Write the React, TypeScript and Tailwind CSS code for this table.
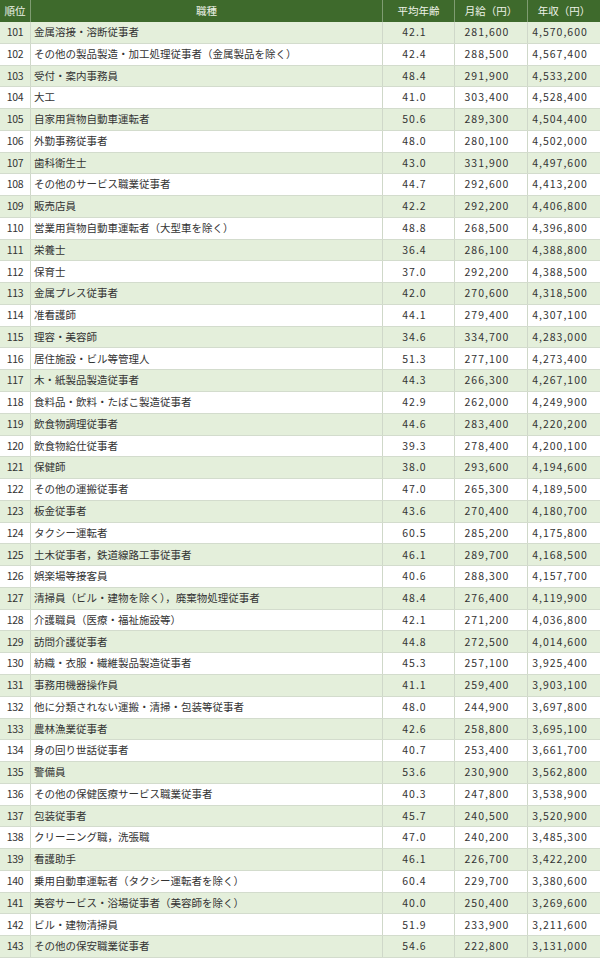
const rows: [number, string, string, string, string][] = [
  [101, '金属溶接・溶断従事者', '42.1', '281,600', '4,570,600'],
  [102, 'その他の製品製造・加工処理従事者（金属製品を除く）', '42.4', '288,500', '4,567,400'],
  [103, '受付・案内事務員', '48.4', '291,900', '4,533,200'],
  [104, '大工', '41.0', '303,400', '4,528,400'],
  [105, '自家用貨物自動車運転者', '50.6', '289,300', '4,504,400'],
  [106, '外勤事務従事者', '48.0', '280,100', '4,502,000'],
  [107, '歯科衛生士', '43.0', '331,900', '4,497,600'],
  [108, 'その他のサービス職業従事者', '44.7', '292,600', '4,413,200'],
  [109, '販売店員', '42.2', '292,200', '4,406,800'],
  [110, '営業用貨物自動車運転者（大型車を除く）', '48.8', '268,500', '4,396,800'],
  [111, '栄養士', '36.4', '286,100', '4,388,800'],
  [112, '保育士', '37.0', '292,200', '4,388,500'],
  [113, '金属プレス従事者', '42.0', '270,600', '4,318,500'],
  [114, '准看護師', '44.1', '279,400', '4,307,100'],
  [115, '理容・美容師', '34.6', '334,700', '4,283,000'],
  [116, '居住施設・ビル等管理人', '51.3', '277,100', '4,273,400'],
  [117, '木・紙製品製造従事者', '44.3', '266,300', '4,267,100'],
  [118, '食料品・飲料・たばこ製造従事者', '42.9', '262,000', '4,249,900'],
  [119, '飲食物調理従事者', '44.6', '283,400', '4,220,200'],
  [120, '飲食物給仕従事者', '39.3', '278,400', '4,200,100'],
  [121, '保健師', '38.0', '293,600', '4,194,600'],
  [122, 'その他の運搬従事者', '47.0', '265,300', '4,189,500'],
  [123, '板金従事者', '43.6', '270,400', '4,180,700'],
  [124, 'タクシー運転者', '60.5', '285,200', '4,175,800'],
  [125, '土木従事者，鉄道線路工事従事者', '46.1', '289,700', '4,168,500'],
  [126, '娯楽場等接客員', '40.6', '288,300', '4,157,700'],
  [127, '清掃員（ビル・建物を除く），廃棄物処理従事者', '48.4', '276,400', '4,119,900'],
  [128, '介護職員（医療・福祉施設等）', '42.1', '271,200', '4,036,800'],
  [129, '訪問介護従事者', '44.8', '272,500', '4,014,600'],
  [130, '紡織・衣服・繊維製品製造従事者', '45.3', '257,100', '3,925,400'],
  [131, '事務用機器操作員', '41.1', '259,400', '3,903,100'],
  [132, '他に分類されない運搬・清掃・包装等従事者', '48.0', '244,900', '3,697,800'],
  [133, '農林漁業従事者', '42.6', '258,800', '3,695,100'],
  [134, '身の回り世話従事者', '40.7', '253,400', '3,661,700'],
  [135, '警備員', '53.6', '230,900', '3,562,800'],
  [136, 'その他の保健医療サービス職業従事者', '40.3', '247,800', '3,538,900'],
  [137, '包装従事者', '45.7', '240,500', '3,520,900'],
  [138, 'クリーニング職，洗張職', '47.0', '240,200', '3,485,300'],
  [139, '看護助手', '46.1', '226,700', '3,422,200'],
  [140, '乗用自動車運転者（タクシー運転者を除く）', '60.4', '229,700', '3,380,600'],
  [141, '美容サービス・浴場従事者（美容師を除く）', '40.0', '250,400', '3,269,600'],
  [142, 'ビル・建物清掃員', '51.9', '233,900', '3,211,600'],
  [143, 'その他の保安職業従事者', '54.6', '222,800', '3,131,000'],
];

const cols = 'grid grid-cols-[31px_352px_72px_73px_72px]';

export default function App() {
  return (
    <div className="w-[600px] h-[958px] overflow-hidden bg-white text-[10.5px] text-[#333] font-['Noto_Sans_CJK_JP',sans-serif] leading-none">
      {/* Header */}
      <div className={`${cols} h-[22px] bg-[#3e6a2c] text-[#eef3e8]`}>
        <div className="flex items-center justify-center border-r border-[#7f9c72]">順位</div>
        <div className="flex items-center justify-center border-r border-[#7f9c72]">職種</div>
        <div className="flex items-center justify-center border-r border-[#7f9c72]">平均年齢</div>
        <div className="flex items-center justify-center border-r border-[#7f9c72]">月給（円）</div>
        <div className="flex items-center justify-center">年収（円）</div>
      </div>

      {rows.map(([rank, job, age, monthly, annual], i) => (
        <div
          key={rank}
          className={`${cols} h-[21.77px] border-b border-[#d3dccd] ${i % 2 === 0 ? 'bg-[#e4efdb]' : 'bg-white'}`}
        >
          <div className="flex items-center justify-center tracking-[-0.3px] border-r border-[#cfd8c9]">{rank}</div>
          <div className="flex items-center pl-[3px] border-r border-[#cfd8c9] whitespace-nowrap overflow-hidden">{job}</div>
          <div className="flex items-center justify-center pr-2 tracking-[1px] border-r border-[#cfd8c9]">{age}</div>
          <div className="flex items-center justify-center pr-2 tracking-[1px] border-r border-[#cfd8c9]">{monthly}</div>
          <div className="flex items-center justify-center pr-2 tracking-[1px]">{annual}</div>
        </div>
      ))}
    </div>
  );
}
